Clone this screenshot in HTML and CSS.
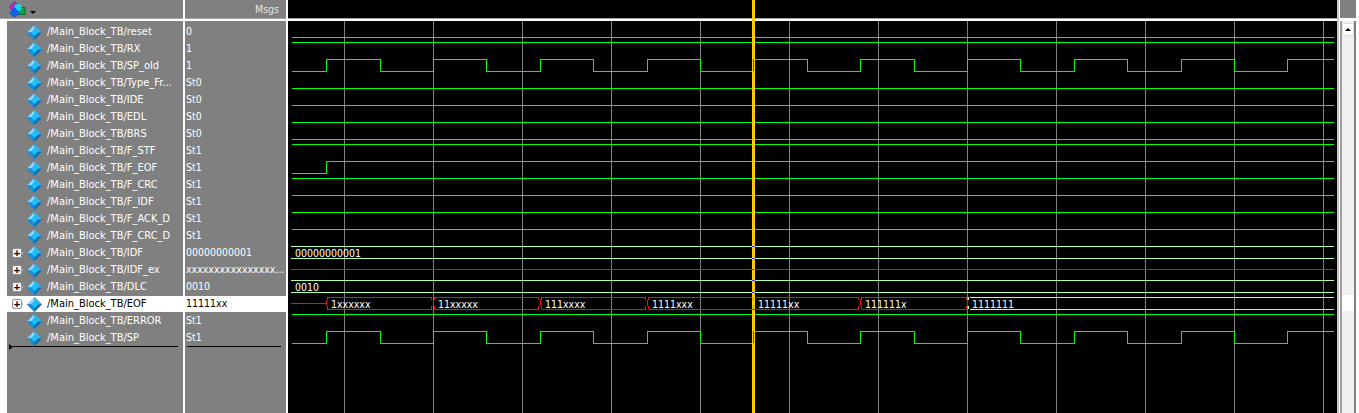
FILE: index.html
```html
<!DOCTYPE html>
<html lang="en">
<head>
    <meta charset="UTF-8">
    <meta name="viewport" content="width=device-width, initial-scale=1.0">
    <title>Wave - Main_Block_TB</title>
    <link rel="stylesheet" href="styles.css">
</head>
<body>
    <svg class="icon-defs" width="0" height="0">
        <defs>
            <symbol id="diamond" viewBox="0 0 15 15">
                <polygon points="7.5,0 15,7.5 7.5,15 0,7.5" fill="#0a6fb5"/>
                <polygon points="7.5,0 0,7.5 4,7.5 7.5,4" fill="#8fdcff"/>
                <polygon points="7.5,0 15,7.5 11,7.5 7.5,4" fill="#35b6f2"/>
                <polygon points="0,7.5 7.5,15 7.5,11 4,7.5" fill="#1590dc"/>
                <polygon points="7.5,4 11,7.5 7.5,11 4,7.5" fill="#1cc4fb"/>
            </symbol>
        </defs>
    </svg>

    <div class="window">
        <div class="pane names">
            <div class="pane-head">
                <svg class="tool-icon" width="17" height="17" viewBox="0 0 17 17">
                    <polygon points="5.5,1 11,6 5.5,11 0.5,6" fill="#b030d0" stroke="#7a1a9a"/>
                    <rect x="9" y="6.5" width="7" height="7" fill="#18a048" stroke="#0c6a2a"/>
                    <circle cx="9" cy="6.5" r="3.5" fill="#10d8f0"/>
                    <polygon points="5.5,6 11,12 5.5,17 0,12" fill="#1060e8"/>
                </svg>
                <span class="tool-arrow"></span>
            </div>
            <div class="pane-body">
                <div class="row"><span class="tree"></span><svg class="diamond"><use href="#diamond"/></svg><span class="name">/Main_Block_TB/reset</span></div>
                <div class="row"><span class="tree"></span><svg class="diamond"><use href="#diamond"/></svg><span class="name">/Main_Block_TB/RX</span></div>
                <div class="row"><span class="tree"></span><svg class="diamond"><use href="#diamond"/></svg><span class="name">/Main_Block_TB/SP_old</span></div>
                <div class="row"><span class="tree"></span><svg class="diamond"><use href="#diamond"/></svg><span class="name">/Main_Block_TB/Type_Fr...</span></div>
                <div class="row"><span class="tree"></span><svg class="diamond"><use href="#diamond"/></svg><span class="name">/Main_Block_TB/IDE</span></div>
                <div class="row"><span class="tree"></span><svg class="diamond"><use href="#diamond"/></svg><span class="name">/Main_Block_TB/EDL</span></div>
                <div class="row"><span class="tree"></span><svg class="diamond"><use href="#diamond"/></svg><span class="name">/Main_Block_TB/BRS</span></div>
                <div class="row"><span class="tree"></span><svg class="diamond"><use href="#diamond"/></svg><span class="name">/Main_Block_TB/F_STF</span></div>
                <div class="row"><span class="tree"></span><svg class="diamond"><use href="#diamond"/></svg><span class="name">/Main_Block_TB/F_EOF</span></div>
                <div class="row"><span class="tree"></span><svg class="diamond"><use href="#diamond"/></svg><span class="name">/Main_Block_TB/F_CRC</span></div>
                <div class="row"><span class="tree"></span><svg class="diamond"><use href="#diamond"/></svg><span class="name">/Main_Block_TB/F_IDF</span></div>
                <div class="row"><span class="tree"></span><svg class="diamond"><use href="#diamond"/></svg><span class="name">/Main_Block_TB/F_ACK_D</span></div>
                <div class="row"><span class="tree"></span><svg class="diamond"><use href="#diamond"/></svg><span class="name">/Main_Block_TB/F_CRC_D</span></div>
                <div class="row"><span class="tree"><span class="expander">+</span></span><svg class="diamond"><use href="#diamond"/></svg><span class="name">/Main_Block_TB/IDF</span></div>
                <div class="row"><span class="tree"><span class="expander">+</span></span><svg class="diamond"><use href="#diamond"/></svg><span class="name">/Main_Block_TB/IDF_ex</span></div>
                <div class="row"><span class="tree"><span class="expander">+</span></span><svg class="diamond"><use href="#diamond"/></svg><span class="name">/Main_Block_TB/DLC</span></div>
                <div class="row selected"><span class="tree"><span class="expander">+</span></span><svg class="diamond"><use href="#diamond"/></svg><span class="name">/Main_Block_TB/EOF</span></div>
                <div class="row"><span class="tree"></span><svg class="diamond"><use href="#diamond"/></svg><span class="name">/Main_Block_TB/ERROR</span></div>
                <div class="row"><span class="tree"></span><svg class="diamond"><use href="#diamond"/></svg><span class="name">/Main_Block_TB/SP</span></div>
                <div class="list-end"><span class="end-mark"></span><span class="end-line"></span></div>
            </div>
        </div>

        <div class="pane values">
            <div class="pane-head msgs">Msgs</div>
            <div class="pane-body">
                <div class="row">0</div>
                <div class="row">1</div>
                <div class="row">1</div>
                <div class="row">St0</div>
                <div class="row">St0</div>
                <div class="row">St0</div>
                <div class="row">St0</div>
                <div class="row">St1</div>
                <div class="row">St1</div>
                <div class="row">St1</div>
                <div class="row">St1</div>
                <div class="row">St1</div>
                <div class="row">St1</div>
                <div class="row">00000000001</div>
                <div class="row">xxxxxxxxxxxxxxxx...</div>
                <div class="row">0010</div>
                <div class="row selected">11111xx</div>
                <div class="row">St1</div>
                <div class="row">St1</div>
                <div class="list-end"><span class="end-line"></span></div>
            </div>
        </div>

        <svg class="wave" width="1049" height="413" viewBox="288 0 1049 413">
            <defs>
                <path id="clock" d="M292 12.5H326.5V0.5H380.5V12.5H433.5V0.5H486.5V12.5H540.5V0.5H593.5V12.5H647.5V0.5H700.5V12.5H754.5V0.5H807.5V12.5H860.5V0.5H914.5V12.5H967.5V0.5H1020.5V12.5H1074.5V0.5H1127.5V12.5H1181.5V0.5H1234.5V12.5H1287.5V0.5H1334"/>
                <path id="change" d="M-1.5 297V300M1.5 297V300M0.5 300V306M-1.5 306V309M1.5 306V309"/>
            </defs>

            <!-- grid -->
            <g class="grid">
                <path d="M344.5 21V413M433.5 21V413M522.5 21V413M611.5 21V413M700.5 21V413M789.5 21V413M878.5 21V413M967.5 21V413M1056.5 21V413M1145.5 21V413M1234.5 21V413M1323.5 21V413"/>
            </g>

            <!-- single bit signals -->
            <g class="bit">
                <path d="M292 37.5H1334M292 42.5H1334"/>
                <use href="#clock" y="59"/>
                <path d="M292 88.5H1334M292 105.5H1334M292 122.5H1334M292 139.5H1334M292 144.5H1334"/>
                <path d="M292 173.5H326.5V161.5H1334"/>
                <path d="M292 178.5H1334M292 195.5H1334M292 212.5H1334M292 229.5H1334"/>
                <path d="M292 314.5H1334"/>
                <use href="#clock" y="331"/>
            </g>

            <!-- buses -->
            <g class="bus">
                <path d="M291 246.5H1334M291 258.5H1334M291 280.5H1334M291 292.5H1334"/>
                <path d="M970 297.5H1334M970 309.5H1334"/>
            </g>
            <g class="unknown">
                <path d="M291 269.5H1334"/>
                <path d="M291 303.5H326"/>
                <path d="M326.5 300V306M327.5 297.5H432M327.5 309.5H432"/>
                <path d="M327.5 297V300M327.5 306V310"/>
                <path d="M435 297.5H539M435 309.5H539M542 297.5H646M542 309.5H646M649 297.5H752M649 309.5H752M756 297.5H859M756 309.5H859M862 297.5H966M862 309.5H966"/>
                <use href="#change" x="433"/>
                <use href="#change" x="540"/>
                <use href="#change" x="647"/>
                <use href="#change" x="860"/>
                <path d="M966.5 297V300M967.5 300V306M966.5 306V309"/>
            </g>
            <path class="bus" d="M968.5 297V300M968.5 306V309"/>

            <g class="wave-text">
                <text x="295" y="257">00000000001</text>
                <text x="295" y="291">0010</text>
                <text x="331" y="308">1xxxxxx</text>
                <text x="438" y="308">11xxxxx</text>
                <text x="545" y="308">111xxxx</text>
                <text x="652" y="308">1111xxx</text>
                <text x="758" y="308">11111xx</text>
                <text x="865" y="308">111111x</text>
                <text x="972" y="308">1111111</text>
            </g>

            <rect class="head-rule" x="288" y="18" width="1049" height="1"/>
            <rect class="head-gap" x="288" y="19" width="1049" height="2"/>

            <!-- cursor -->
            <rect class="cursor" x="752" y="0" width="3" height="413"/>
            <path class="cursor-mark" d="M752 246.5H755M752 258.5H755M752 280.5H755M752 292.5H755"/>
            <path class="unknown" d="M752 269.5H755M753.5 331V343M753.5 59V71M752 309.5H755"/>
            <path class="bit" d="M753.5 297V301M753.5 305V309"/>
        </svg>

        <div class="scrollbar">
            <div class="scroll-head"></div>
            <div class="scroll-track">
                <div class="scroll-btn"><span class="scroll-arrow"></span></div>
                <div class="scroll-mark"></div>
            </div>
        </div>
    </div>
</body>
</html>
```

FILE: styles.css
```css
body {
    margin: 0;
    background-color: #ffffff;
    font-family: "DejaVu Sans", sans-serif;
    font-stretch: condensed;
    font-size: 10.5px;
    overflow: hidden;
}
.icon-defs {
    display: block;
    height: 0;
}
.window {
    display: flex;
    height: 413px;
    overflow: hidden;
}
.pane {
    display: flex;
    flex-direction: column;
    flex: none;
    margin-right: 2px;
}
.names {
    width: 183px;
}
.values {
    width: 101px;
}
.pane-head {
    display: flex;
    align-items: center;
    box-sizing: border-box;
    height: 19px;
    margin-bottom: 2px;
    background-color: #808080;
    border-bottom: 1px solid #a6a6a6;
}
.tool-icon {
    margin: 0 4px 0 9px;
}
.tool-arrow {
    width: 0;
    height: 0;
    margin-top: 6px;
    border-left: 3px solid transparent;
    border-right: 3px solid transparent;
    border-top: 3px solid #000000;
}
.msgs {
    justify-content: flex-end;
    padding-right: 7px;
    color: #e4e4e4;
}
.pane-body {
    flex: 1;
    padding-top: 3px;
    background-color: #808080;
    color: #ffffff;
}
.names .pane-body {
    margin-left: 7px;
}
.row {
    display: flex;
    align-items: center;
    box-sizing: border-box;
    height: 16px;
    margin-bottom: 1px;
    white-space: nowrap;
    overflow: hidden;
}
.values .row {
    padding: 0 0 2px 1px;
}
.name {
    padding-bottom: 2px;
    font-size: 11px;
}
.selected {
    background-color: #ffffff;
    color: #000000;
}
.tree {
    display: flex;
    align-items: center;
    flex: none;
    width: 20px;
    height: 100%;
}
.expander {
    display: flex;
    align-items: center;
    justify-content: center;
    box-sizing: border-box;
    width: 10px;
    height: 10px;
    margin-left: 5px;
    background-color: #f4f4f8;
    border: 1px solid #8a8f9c;
    border-radius: 2px;
    color: #000000;
    font-family: "Liberation Sans", sans-serif;
    font-size: 11px;
    font-weight: bold;
    line-height: 1;
    box-shadow: 5px 0 0 -4px #c0c0c0;
}
.diamond {
    flex: none;
    width: 15px;
    height: 15px;
    margin-right: 5px;
}
.list-end {
    display: flex;
    align-items: center;
    height: 7px;
    margin-top: -4px;
    padding: 0 5px 0 2px;
}
.end-mark {
    width: 0;
    height: 0;
    border-top: 3px solid transparent;
    border-bottom: 3px solid transparent;
    border-left: 4px solid #000000;
}
.end-line {
    flex: 1;
    height: 1px;
    background-color: #000000;
}
.wave {
    display: block;
    flex: none;
    background-color: #000000;
    shape-rendering: crispEdges;
}
.grid path {
    fill: none;
    stroke: #808080;
}
.bit,
.bit path,
.bit use {
    fill: none;
    stroke: #00ff00;
}
.bus,
.bus path {
    fill: none;
    stroke: #b0ffb0;
}
.unknown,
.unknown path,
.unknown use {
    fill: none;
    stroke: #f01010;
}
.wave-text text {
    fill: #ffffff;
    font-family: "DejaVu Sans", sans-serif;
    font-stretch: condensed;
    font-size: 10.5px;
}
.head-rule {
    fill: #a6a6a6;
}
.head-gap {
    fill: #ffffff;
}
.cursor {
    fill: #ffcc00;
}
.cursor-mark {
    stroke: #4040d0;
}
.scrollbar {
    display: flex;
    flex-direction: column;
    flex: 1;
    border-left: 2px solid #c8c8c8;
    padding-left: 1px;
    padding-right: 3px;
}
.scroll-head {
    height: 18px;
    margin-bottom: 3px;
    background-color: #808080;
}
.scroll-track {
    flex: 1;
    padding-top: 2px;
    background-color: #f0f0f0;
    border-left: 2px solid #a0a0a0;
    border-right: 2px solid #808080;
}
.scroll-btn {
    display: flex;
    align-items: center;
    justify-content: center;
    box-sizing: border-box;
    height: 13px;
    background-color: #ffffff;
    border: 1px solid #e0e0e0;
}
.scroll-arrow {
    width: 0;
    height: 0;
    border-left: 3px solid transparent;
    border-right: 3px solid transparent;
    border-bottom: 3px solid #000000;
}
.scroll-mark {
    height: 16px;
    margin-top: 259px;
    background-color: #ffffff;
}
```
